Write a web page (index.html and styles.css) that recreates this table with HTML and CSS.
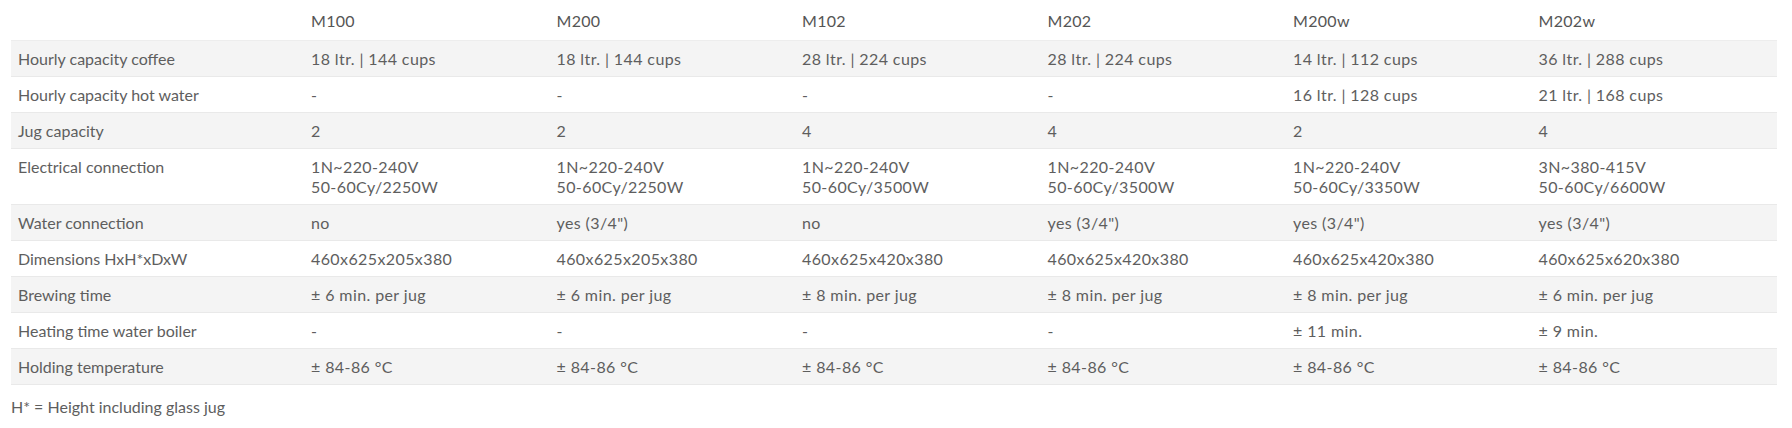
FILE: index.html
```html
<!DOCTYPE html>
<html lang="en">
<head>
<meta charset="utf-8">
<title>Specifications</title>
<link rel="stylesheet" href="styles.css">
</head>
<body>
<div class="specs">
  <table class="spec-table">
    <colgroup>
      <col class="col-label">
      <col class="col-model"><col class="col-model"><col class="col-model">
      <col class="col-model"><col class="col-model"><col class="col-model">
    </colgroup>
    <thead>
      <tr>
        <th></th>
        <th>M100</th><th>M200</th><th>M102</th><th>M202</th><th>M200w</th><th>M202w</th>
      </tr>
    </thead>
    <tbody>
      <tr class="odd">
        <td class="label">Hourly capacity coffee</td>
        <td>18 ltr. | 144 cups</td><td>18 ltr. | 144 cups</td><td>28 ltr. | 224 cups</td><td>28 ltr. | 224 cups</td><td>14 ltr. | 112 cups</td><td>36 ltr. | 288 cups</td>
      </tr>
      <tr>
        <td class="label">Hourly capacity hot water</td>
        <td>-</td><td>-</td><td>-</td><td>-</td><td>16 ltr. | 128 cups</td><td>21 ltr. | 168 cups</td>
      </tr>
      <tr class="odd">
        <td class="label">Jug capacity</td>
        <td>2</td><td>2</td><td>4</td><td>4</td><td>2</td><td>4</td>
      </tr>
      <tr>
        <td class="label">Electrical connection</td>
        <td>1N~220-240V<br>50-60Cy/2250W</td><td>1N~220-240V<br>50-60Cy/2250W</td><td>1N~220-240V<br>50-60Cy/3500W</td><td>1N~220-240V<br>50-60Cy/3500W</td><td>1N~220-240V<br>50-60Cy/3350W</td><td>3N~380-415V<br>50-60Cy/6600W</td>
      </tr>
      <tr class="odd">
        <td class="label">Water connection</td>
        <td>no</td><td>yes (3/4")</td><td>no</td><td>yes (3/4")</td><td>yes (3/4")</td><td>yes (3/4")</td>
      </tr>
      <tr>
        <td class="label">Dimensions HxH*xDxW</td>
        <td>460x625x205x380</td><td>460x625x205x380</td><td>460x625x420x380</td><td>460x625x420x380</td><td>460x625x420x380</td><td>460x625x620x380</td>
      </tr>
      <tr class="odd">
        <td class="label">Brewing time</td>
        <td>± 6 min. per jug</td><td>± 6 min. per jug</td><td>± 8 min. per jug</td><td>± 8 min. per jug</td><td>± 8 min. per jug</td><td>± 6 min. per jug</td>
      </tr>
      <tr>
        <td class="label">Heating time water boiler</td>
        <td>-</td><td>-</td><td>-</td><td>-</td><td>± 11 min.</td><td>± 9 min.</td>
      </tr>
      <tr class="odd">
        <td class="label">Holding temperature</td>
        <td>± 84-86 °C</td><td>± 84-86 °C</td><td>± 84-86 °C</td><td>± 84-86 °C</td><td>± 84-86 °C</td><td>± 84-86 °C</td>
      </tr>
    </tbody>
  </table>
  <p class="footnote">H* = Height including glass jug</p>
</div>
</body>
</html>
```
FILE: styles.css
```css
html, body {
  margin: 0;
  padding: 0;
  background: #ffffff;
}

body {
  font-family: "Lato", "Liberation Sans", sans-serif;
  font-size: 16px;
  color: #5e5e5e;
}

.specs {
  padding: 0 0 0 11px;
}

.spec-table {
  width: 1766px;
  border-collapse: collapse;
  table-layout: fixed;
}

.col-label {
  width: 293px;
}

.col-model {
  width: 245.5px;
}

.spec-table th {
  text-align: left;
  font-weight: 400;
  color: #555;
  font-size: 16px;
  letter-spacing: 0.3px;
  line-height: 20px;
  padding: 11px 7px 9px;
}

.spec-table td {
  text-align: left;
  vertical-align: top;
  line-height: 20px;
  letter-spacing: 0.4px;
  padding: 8px 7px 7px;
  border-bottom: 1px solid #e9e9e9;
}

.spec-table td.label {
  letter-spacing: 0;
}

.spec-table tbody tr:first-child td {
  border-top: 1px solid #ededed;
}

.spec-table tr.odd td {
  background: #f4f4f4;
}

.footnote {
  margin: 12px 0 0;
  line-height: 20px;
  letter-spacing: 0;
}
```
